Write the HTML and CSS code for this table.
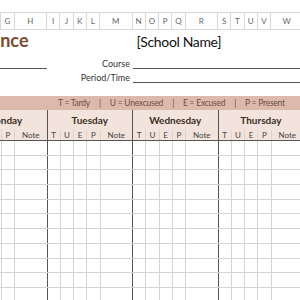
FILE: index.html
```html
<!DOCTYPE html>
<html lang="en">
<head>
  <meta charset="UTF-8" />
  <title>Attendance</title>
  <link rel="stylesheet" href="styles.css">
</head>
<body>
  <div class="sheet">
    <div class="col-letters">
      <span>D</span><span>E</span><span>F</span><span>G</span><span>H</span>
      <span>I</span><span>J</span><span>K</span><span>L</span><span>M</span>
      <span>N</span><span>O</span><span>P</span><span>Q</span><span>R</span>
      <span>S</span><span>T</span><span>U</span><span>V</span><span>W</span>
    </div>

    <div class="head">
      <div class="title-row">
        <div class="title"><span>Class Attendance</span></div>
        <div class="school">[School Name]</div>
      </div>
      <div class="field field-course">
        <div class="blank"></div>
        <div class="label">Course</div>
        <div class="line"></div>
      </div>
      <div class="field field-period">
        <div class="spacer"></div>
        <div class="label">Period/Time</div>
        <div class="line"></div>
      </div>
    </div>

    <table class="grid">
      <colgroup id="cols"></colgroup>
      <thead>
        <tr>
          <td class="legend" colspan="20">
            <div class="legend-items">
              <span>T = Tardy</span><span>|</span>
              <span>U = Unexcused</span><span>|</span>
              <span>E = Excused</span><span>|</span>
              <span>P = Present</span>
            </div>
          </td>
        </tr>
        <tr class="days">
          <th colspan="5">Monday</th>
          <th colspan="5">Tuesday</th>
          <th colspan="5">Wednesday</th>
          <th colspan="5">Thursday</th>
        </tr>
        <tr class="subs" id="subs"></tr>
      </thead>
      <tbody id="rows"></tbody>
    </table>
  </div>

  <script>
    // 4 days, each: T U E P + Note
    const marks = ["T", "U", "E", "P", "Note"];
    const cols = document.getElementById("cols");
    const subs = document.getElementById("subs");
    const rows = document.getElementById("rows");

    for (let d = 0; d < 4; d++) {
      marks.forEach(m => {
        const col = document.createElement("col");
        col.className = m === "Note" ? "note" : "mark";
        cols.appendChild(col);
        const th = document.createElement("th");
        th.textContent = m;
        if (m === "Note") th.className = "end";
        subs.appendChild(th);
      });
    }

    for (let r = 0; r < 11; r++) {
      const tr = document.createElement("tr");
      for (let c = 0; c < 20; c++) {
        const td = document.createElement("td");
        if (c % 5 === 4) td.className = "end";
        tr.appendChild(td);
      }
      rows.appendChild(tr);
    }
  </script>
</body>
</html>
```

FILE: styles.css
```css
html, body {
  margin: 0;
  padding: 0;
  width: 300px;
  height: 300px;
  overflow: hidden;
  background-color: #ffffff;
}

body {
  font-family: Lato, "Liberation Sans", sans-serif;
  color: #222;
}

/* sheet is scrolled a bit to the right, Monday is partly hidden */
.sheet {
  margin-left: -38.5px;
  width: 342px;
}

/* ===== column letters ===== */
.col-letters {
  display: grid;
  grid-template-columns: repeat(4, 13.25px 13.25px 13.25px 13.25px 32.5px);
  margin-top: 12px;
  height: 16px;
  border-top: 1px solid #d9d9d9;
  border-bottom: 1px solid #d9d9d9;
}

.col-letters span {
  display: flex;
  align-items: center;
  justify-content: center;
  border-right: 1px solid #d9d9d9;
  font-size: 8px;
  color: #666;
}

/* ===== title + fields ===== */
.head {
  height: 66px;
  box-sizing: border-box;
  padding-top: 1px;
}

.title-row {
  display: flex;
  align-items: baseline;
  height: 26px;
}

.title {
  width: 67px;
  display: flex;
  justify-content: flex-end;
  white-space: nowrap;
  font-size: 18px;
  line-height: 1;
  font-weight: bold;
  color: #7b4a2e;
}

.school {
  margin-left: 108px;
  font-size: 14px;
  line-height: 1;
  letter-spacing: -0.35px;
  color: #111;
}

.field {
  display: flex;
  align-items: flex-end;
}
.field-course { height: 12px; }
.field-period { height: 14px; }

.blank, .spacer { width: 85.5px; }
.blank { border-bottom: 1px solid #555; }

.label {
  width: 83px;
  text-align: right;
  font-size: 9px;
  line-height: 11px;
  color: #333;
}

.line {
  flex: 1;
  margin-left: 3px;
  border-bottom: 1px solid #555;
}

/* ===== attendance grid ===== */
.grid {
  border-collapse: collapse;
  table-layout: fixed;
  width: 342px;
}

col.mark { width: 13.25px; }
col.note { width: 32.5px; }

.grid th, .grid td {
  padding: 0;
}

.legend {
  height: 14px;
  background-color: #dcb9aa;
  padding-left: 96.5px !important;
}

.legend-items {
  display: flex;
  gap: 9px;
  font-size: 8.5px;
  letter-spacing: -0.25px;
  color: #6e5046;
  white-space: nowrap;
}

.days th {
  height: 20px;
  background-color: #f2e4dd;
  border-right: 1px solid #555;
  font-size: 10px;
  font-weight: bold;
  color: #3b2e26;
}

.subs th {
  height: 10px;
  background-color: #f2e4dd;
  border-right: 1px solid #e2d2ca;
  border-bottom: 1px solid #555;
  font-size: 8px;
  font-weight: normal;
  color: #444;
  line-height: 10px;
}

.grid tbody td {
  height: 13.7px;
  border-right: 1px solid #d4d4d4;
  border-bottom: 1px solid #d4d4d4;
}

.grid .end,
.subs th.end {
  border-right: 1px solid #555;
}
```
